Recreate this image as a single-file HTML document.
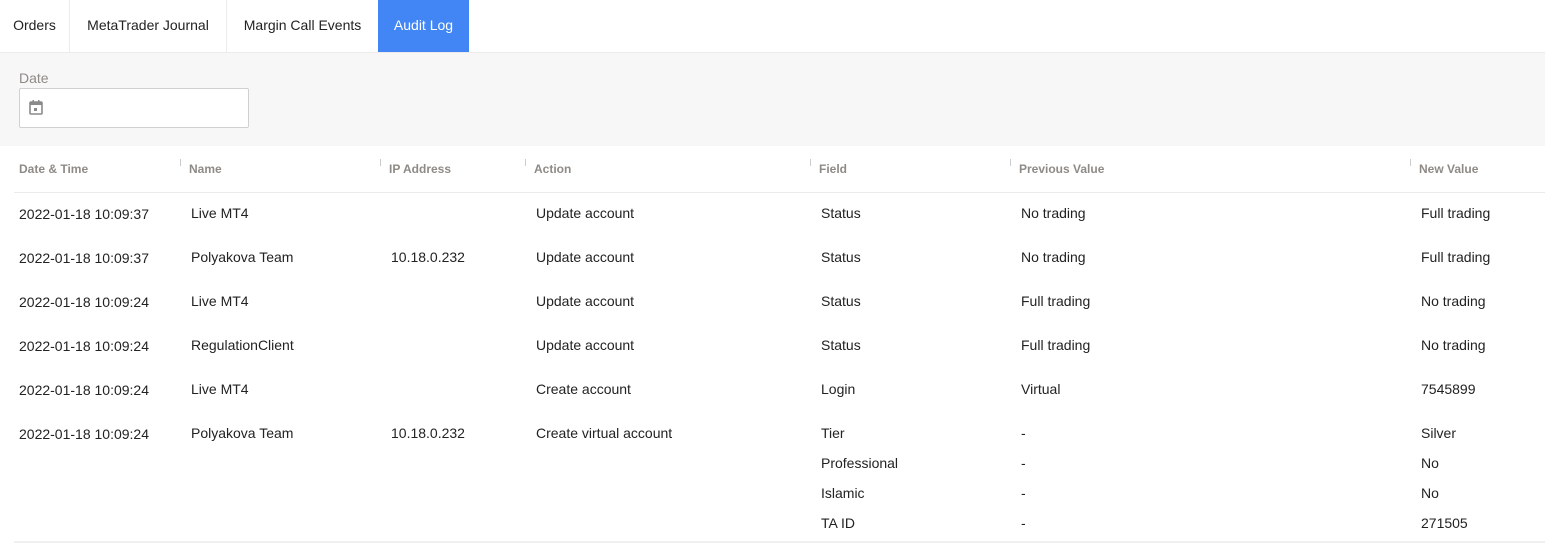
<!DOCTYPE html>
<html><head><meta charset="utf-8"><style>
*{margin:0;padding:0;box-sizing:border-box}
body{width:1545px;height:543px;background:#fff;font-family:"Liberation Sans",sans-serif;color:#222;position:relative;overflow:hidden}
.a{position:absolute;white-space:nowrap;font-size:14px;line-height:20px}
.h{position:absolute;white-space:nowrap;font-size:12px;line-height:16px;color:#8f8a86;font-weight:bold}
.t{position:absolute;top:0;height:52px;line-height:50px;font-size:14px;text-align:center;border-right:1px solid #ececec}
.tick{position:absolute;top:159px;width:1px;height:7px;background:#ccc}
</style></head><body>
<div class="t" style="left:0;width:70px">Orders</div>
<div class="t" style="left:70px;width:157px">MetaTrader Journal</div>
<div class="t" style="left:227px;width:151px;border-right:none">Margin Call Events</div>
<div class="t" style="left:378px;width:91px;background:#4285f4;color:#fff;border:none">Audit Log</div>
<div style="position:absolute;left:0;top:52px;width:1545px;height:94px;background:#f7f7f7;border-top:1px solid #ebebeb"></div>
<div class="a" style="left:19px;top:68px;color:#8f8a86">Date</div>
<div style="position:absolute;left:19px;top:88px;width:230px;height:40px;background:#fff;border:1px solid #d0d0d0;border-radius:2px"></div>
<svg style="position:absolute;left:29px;top:100px" width="14" height="15" viewBox="0 0 14 15"><rect x="1" y="2" width="12" height="12" rx="1" fill="none" stroke="#8a8a8a" stroke-width="1.6"/><rect x="1" y="2" width="12" height="3" fill="#8a8a8a"/><rect x="3.5" y="0" width="1.5" height="3" fill="#8a8a8a"/><rect x="9" y="0" width="1.5" height="3" fill="#8a8a8a"/><rect x="5" y="8" width="3" height="3" fill="#8a8a8a"/></svg>
<div class="h" style="left:19px;top:161px">Date &amp; Time</div>
<div class="h" style="left:189px;top:161px">Name</div>
<div class="h" style="left:389px;top:161px">IP Address</div>
<div class="h" style="left:534px;top:161px">Action</div>
<div class="h" style="left:819px;top:161px">Field</div>
<div class="h" style="left:1019px;top:161px">Previous Value</div>
<div class="h" style="left:1419px;top:161px">New Value</div>
<div class="tick" style="left:180px"></div><div class="tick" style="left:380px"></div><div class="tick" style="left:525px"></div><div class="tick" style="left:810px"></div><div class="tick" style="left:1010px"></div><div class="tick" style="left:1410px"></div>
<div style="position:absolute;left:14px;top:192px;width:1531px;height:1px;background:#ebebeb"></div>
<div style="position:absolute;left:14px;top:541px;width:1531px;height:2px;background:#f0f0f0"></div>

<div class="a" style="left:19px;top:204px">2022-01-18 10:09:37</div><div class="a" style="left:191px;top:203px">Live MT4</div><div class="a" style="left:536px;top:203px">Update account</div><div class="a" style="left:821px;top:203px">Status</div><div class="a" style="left:1021px;top:203px">No trading</div><div class="a" style="left:1421px;top:203px">Full trading</div>

<div class="a" style="left:19px;top:248px">2022-01-18 10:09:37</div><div class="a" style="left:191px;top:247px">Polyakova Team</div><div class="a" style="left:391px;top:247px">10.18.0.232</div><div class="a" style="left:536px;top:247px">Update account</div><div class="a" style="left:821px;top:247px">Status</div><div class="a" style="left:1021px;top:247px">No trading</div><div class="a" style="left:1421px;top:247px">Full trading</div>

<div class="a" style="left:19px;top:292px">2022-01-18 10:09:24</div><div class="a" style="left:191px;top:291px">Live MT4</div><div class="a" style="left:536px;top:291px">Update account</div><div class="a" style="left:821px;top:291px">Status</div><div class="a" style="left:1021px;top:291px">Full trading</div><div class="a" style="left:1421px;top:291px">No trading</div>

<div class="a" style="left:19px;top:336px">2022-01-18 10:09:24</div><div class="a" style="left:191px;top:335px">RegulationClient</div><div class="a" style="left:536px;top:335px">Update account</div><div class="a" style="left:821px;top:335px">Status</div><div class="a" style="left:1021px;top:335px">Full trading</div><div class="a" style="left:1421px;top:335px">No trading</div>

<div class="a" style="left:19px;top:380px">2022-01-18 10:09:24</div><div class="a" style="left:191px;top:379px">Live MT4</div><div class="a" style="left:536px;top:379px">Create account</div><div class="a" style="left:821px;top:379px">Login</div><div class="a" style="left:1021px;top:379px">Virtual</div><div class="a" style="left:1421px;top:379px">7545899</div>

<div class="a" style="left:19px;top:424px">2022-01-18 10:09:24</div><div class="a" style="left:191px;top:423px">Polyakova Team</div><div class="a" style="left:391px;top:423px">10.18.0.232</div><div class="a" style="left:536px;top:423px">Create virtual account</div>
<div class="a" style="left:821px;top:423px">Tier</div><div class="a" style="left:1021px;top:423px">-</div><div class="a" style="left:1421px;top:423px">Silver</div>
<div class="a" style="left:821px;top:453px">Professional</div><div class="a" style="left:1021px;top:453px">-</div><div class="a" style="left:1421px;top:453px">No</div>
<div class="a" style="left:821px;top:483px">Islamic</div><div class="a" style="left:1021px;top:483px">-</div><div class="a" style="left:1421px;top:483px">No</div>
<div class="a" style="left:821px;top:513px">TA ID</div><div class="a" style="left:1021px;top:513px">-</div><div class="a" style="left:1421px;top:513px">271505</div>
</body></html>
